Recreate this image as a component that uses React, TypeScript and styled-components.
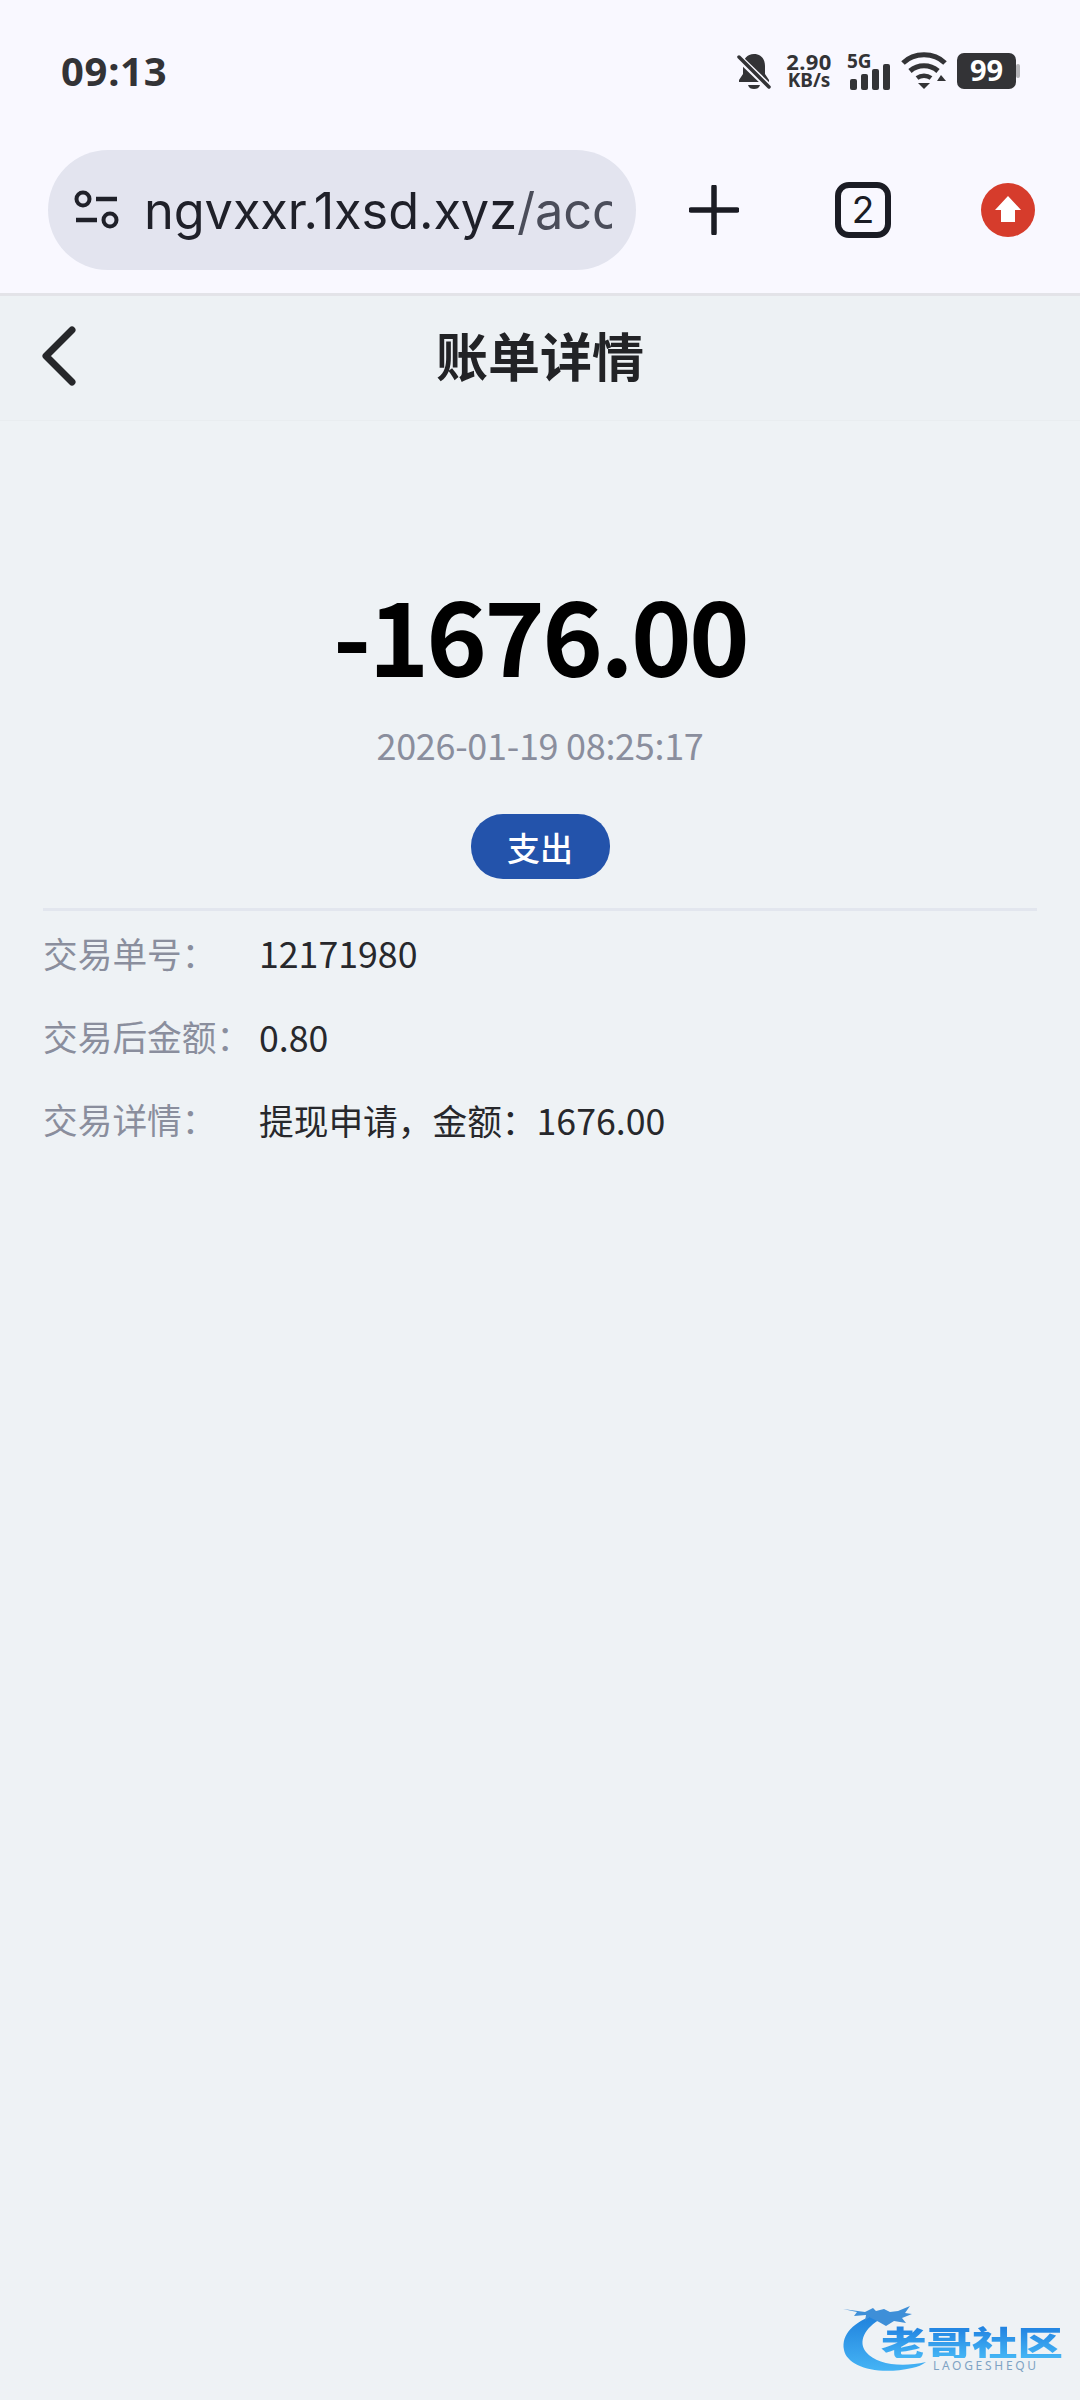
import React from 'react';
import styled, { createGlobalStyle } from 'styled-components';

const Global = createGlobalStyle`
  html, body { margin: 0; padding: 0; background: #eef2f5; }
  * { box-sizing: border-box; }
`;

const CJK = `"Noto Sans CJK SC", "Noto Sans", sans-serif`;
const UI = `"Noto Sans", "Open Sans", sans-serif`;

const Page = styled.div`
  width: 1080px;
  height: 2400px;
  background: #eef2f5;
  display: flex;
  flex-direction: column;
  position: relative;
  overflow: hidden;
  font-family: ${CJK};
`;

const Chrome = styled.header`
  height: 296px;
  background: #f9f8ff;
  border-bottom: 3px solid #e3e3e8;
  display: flex;
  flex-direction: column;
`;

const StatusBar = styled.div`
  height: 150px;
  padding: 0 59px 9px 61px;
  display: flex;
  align-items: center;
  justify-content: space-between;
`;

const Clock = styled.div`
  font-family: ${UI};
  font-weight: 700;
  font-size: 40px;
  color: #333336;
  letter-spacing: 0.7px;
`;

const StatusIcons = styled.div`
  display: flex;
  align-items: center;
`;

const Speed = styled.div`
  width: 50px;
  margin: 0 13px 0 13px;
  font-family: ${UI};
  font-weight: 700;
  color: #333336;
  text-align: center;
  display: flex;
  flex-direction: column;
  align-items: center;
  line-height: 19px;
  white-space: nowrap;
`;
const SpeedValue = styled.span`font-size: 22px; letter-spacing: 0.4px;`;
const SpeedUnit = styled.span`font-size: 19px;`;

const Toolbar = styled.div`
  height: 120px;
  padding: 0 0 0 48px;
  display: flex;
  align-items: center;
`;

const UrlPill = styled.div`
  width: 588px;
  height: 120px;
  border-radius: 60px;
  background: #e3e4ef;
  display: flex;
  align-items: center;
  padding: 0 24px 0 26px;
`;

const UrlText = styled.div`
  margin-left: 24px;
  flex: 1;
  overflow: hidden;
  white-space: nowrap;
  font-family: "Inter", "Roboto", sans-serif;
  font-size: 50.5px;
  letter-spacing: -0.1px;
  color: #1f2029;
`;
const UrlTail = styled.span`color: #4b4d5a;`;

const ToolButton = styled.div<{ $left: number }>`
  width: 60px;
  height: 60px;
  margin-left: ${p => p.$left}px;
  display: flex;
  align-items: center;
  justify-content: center;
`;

const NavBar = styled.div`
  height: 125px;
  background: #edf1f4;
  border-bottom: 1px solid #e9edf0;
  display: flex;
  align-items: center;
  justify-content: center;
  position: relative;
  padding-bottom: 7px;
`;

const BackIcon = styled.svg`
  position: absolute;
  left: 40px;
  top: 30px;
`;

const NavTitle = styled.h1`
  margin: 0;
  font-size: 52px;
  font-weight: 700;
  color: #222326;
`;

const Summary = styled.section`
  padding-top: 147px;
  display: flex;
  flex-direction: column;
  align-items: center;
`;

const Amount = styled.div`
  font-size: 103px;
  line-height: 130px;
  letter-spacing: -2.8px;
  font-weight: 700;
  color: #000;
`;

const DateText = styled.div`
  margin-top: 21px;
  font-size: 36px;
  letter-spacing: -0.3px;
  line-height: 50px;
  color: #8a8e9d;
`;

const TypeBadge = styled.div`
  margin-top: 45px;
  width: 139px;
  height: 65px;
  border-radius: 32px;
  background: #2353ab;
  color: #fff;
  font-size: 33px;
  font-weight: 500;
  display: flex;
  align-items: center;
  justify-content: center;
`;

const Details = styled.section`
  margin: 29px 43px 0;
  border-top: 3px solid #e2e6ee;
  padding-top: 0;
  display: flex;
  flex-direction: column;
`;

const Row = styled.div`
  height: 83.4px;
  display: flex;
  align-items: center;
  font-size: 34.7px;
`;

const Label = styled.div`
  width: 216px;
  color: #8a8e9d;
`;

const Value = styled.div`
  color: #27282c;
`;

const Num = styled.span`
  font-size: 35.7px;
`;

const Watermark = styled.div`
  position: absolute;
  left: 840px;
  top: 2300px;
  width: 235px;
  height: 80px;
`;
const MarkTitle = styled.div`
  position: absolute;
  left: 41px;
  top: 19px;
  font-size: 45.5px;
  line-height: 45px;
  font-weight: 900;
  white-space: nowrap;
  transform: scaleY(0.75);
  background: linear-gradient(180deg, #1f7fe0, #45b6f5);
  -webkit-background-clip: text;
  background-clip: text;
  color: transparent;
`;
const MarkSub = styled.div`
  position: absolute;
  left: 93px;
  top: 59px;
  font-family: ${UI};
  font-size: 12px;
  line-height: 14px;
  letter-spacing: 2.7px;
  color: #7fa3c4;
`;

const rows: [string, string, string][] = [
  ['交易单号：', '', '12171980'],
  ['交易后金额：', '', '0.80'],
  ['交易详情：', '提现申请，金额：', '1676.00'],
];

export default function App() {
  return (
    <Page>
      <Global />
      <Chrome>
        <StatusBar>
          <Clock>09:13</Clock>
          <StatusIcons>
            <svg width="34" height="38" viewBox="0 0 34 38">
              <path d="M17 2c-7 0-11 5-11 12v8l-4 6v2h30v-2l-4-6v-8c0-7-4-12-11-12z" fill="#333336" />
              <path d="M11 33h12c-1 3-3 4-6 4s-5-1-6-4z" fill="#333336" />
              <path d="M1 5l32 31" stroke="#f9f8ff" strokeWidth="7" />
              <path d="M2 5l30 30" stroke="#333336" strokeWidth="3.5" strokeLinecap="round" />
            </svg>
            <Speed>
              <SpeedValue>2.90</SpeedValue>
              <SpeedUnit>KB/s</SpeedUnit>
            </Speed>
            <svg width="44" height="38" viewBox="0 0 44 38">
              <text x="0" y="16" fontFamily="Noto Sans" fontWeight="700" fontSize="19" fill="#333336">5G</text>
              <rect x="3" y="27" width="7" height="11" rx="2" fill="#333336" />
              <rect x="14" y="22" width="7" height="16" rx="2" fill="#333336" />
              <rect x="25" y="17" width="7" height="21" rx="2" fill="#333336" />
              <rect x="36" y="12" width="7" height="26" rx="2" fill="#333336" />
            </svg>
            <svg style={{ marginLeft: 10 }} width="46" height="38" viewBox="0 0 46 38">
              <path d="M2 11C13 0 33 0 44 11" fill="none" stroke="#333336" strokeWidth="5" />
              <path d="M9 19c8-7 20-7 28 0" fill="none" stroke="#333336" strokeWidth="5" />
              <path d="M16 26c4-3 10-3 14 0" fill="none" stroke="#333336" strokeWidth="4.5" />
              <path d="M17 31h12l-6 6z" fill="#333336" />
              <path d="M36 29l4-6 5 6z" fill="#333336" />
            </svg>
            <svg style={{ marginLeft: 10 }} width="64" height="38" viewBox="0 0 64 38">
              <rect x="0" y="1" width="59" height="36" rx="7" fill="#333336" />
              <rect x="59" y="12" width="4" height="14" rx="2" fill="#b4b4b8" />
              <text x="29.5" y="29" textAnchor="middle" fontFamily="Noto Sans" fontWeight="700" fontSize="29" fill="#fff">99</text>
            </svg>
          </StatusIcons>
        </StatusBar>
        <Toolbar>
          <UrlPill>
            <svg width="46" height="40" viewBox="0 0 46 40">
              <circle cx="9" cy="9" r="6.5" fill="none" stroke="#1f2029" strokeWidth="4" />
              <path d="M22 9h21M2 30h21" stroke="#1f2029" strokeWidth="4.5" />
              <circle cx="36" cy="30" r="6.5" fill="none" stroke="#1f2029" strokeWidth="4" />
            </svg>
            <UrlText>ngvxxr.1xsd.xyz<UrlTail>/acc</UrlTail></UrlText>
          </UrlPill>
          <ToolButton $left={48}>
            <svg width="50" height="50" viewBox="0 0 50 50">
              <path d="M25 2v46M2 25h46" stroke="#1b1c24" strokeWidth="5.5" strokeLinecap="round" />
            </svg>
          </ToolButton>
          <ToolButton $left={89}>
            <svg width="56" height="56" viewBox="0 0 56 56">
              <rect x="3" y="3" width="50" height="50" rx="11" fill="none" stroke="#1b1c24" strokeWidth="6" />
              <text x="28" y="41" textAnchor="middle" fontFamily="Inter" fontSize="37" fill="#1b1c24">2</text>
            </svg>
          </ToolButton>
          <ToolButton $left={85}>
            <svg width="54" height="54" viewBox="0 0 54 54">
              <circle cx="27" cy="27" r="27" fill="#d63c2c" />
              <path d="M27 13L40 27H34V39H20V27H14z" fill="#fff" />
            </svg>
          </ToolButton>
        </Toolbar>
      </Chrome>
      <NavBar>
        <BackIcon width="36" height="60" viewBox="0 0 36 60">
          <path d="M32 4L6 30l26 26" fill="none" stroke="#26272a" strokeWidth="7" strokeLinecap="round" strokeLinejoin="round" />
        </BackIcon>
        <NavTitle>账单详情</NavTitle>
      </NavBar>
      <Summary>
        <Amount>-1676.00</Amount>
        <DateText>2026-01-19 08:25:17</DateText>
        <TypeBadge>支出</TypeBadge>
      </Summary>
      <Details>
        {rows.map(([l, text, num]) => (
          <Row key={l}>
            <Label>{l}</Label>
            <Value>{text}<Num>{num}</Num></Value>
          </Row>
        ))}
      </Details>
      <Watermark>
        <svg width="100" height="76" viewBox="0 0 100 76">
          <defs>
            <linearGradient id="moon" x1="0" y1="0" x2="0" y2="1">
              <stop offset="0" stopColor="#1f80dc" />
              <stop offset="1" stopColor="#45b4f5" />
            </linearGradient>
          </defs>
          <path d="M36 14C14 22 1 34 4 50c3 16 32 26 68 18 6-1 10-3 14-6-26 6-50 2-60-10-8-10-2-24 16-34z" fill="url(#moon)" />
          <path d="M3 9l22 3 8-4 3 3 8-2 6 3 8-1 12-5-5 7 7 1-10 4 4 5-12-2-8 5-7-4-10-5-4 4 1-6-12 1 3-4z" fill="#3e8fd8" />
        </svg>
        <MarkTitle>老哥社区</MarkTitle>
        <MarkSub>LAOGESHEQU</MarkSub>
      </Watermark>
    </Page>
  );
}
